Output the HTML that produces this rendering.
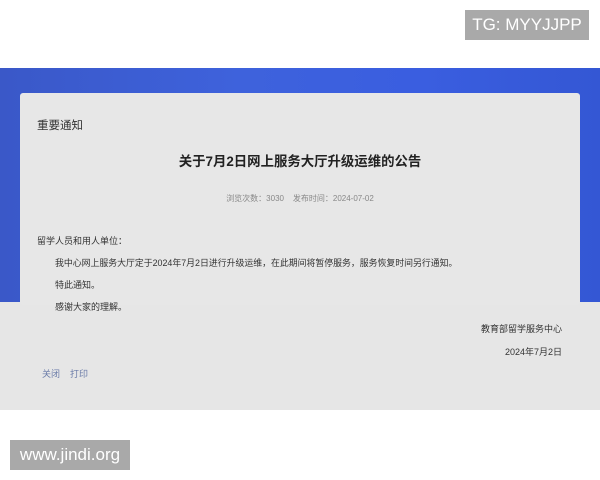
<!DOCTYPE html>
<html><head><meta charset="utf-8"><style>
body{margin:0;width:600px;height:480px;background:#fff;position:relative;overflow:hidden;font-family:"Liberation Sans","Noto Sans CJK SC",sans-serif;}
.blue{position:absolute;left:0;top:68px;width:600px;height:235px;background:linear-gradient(90deg,#3a58c8 0%,#3e62dc 40%,#3a5ee0 70%,#3457d4 100%);}
.grey{position:absolute;left:0;top:302px;width:600px;height:108px;background:#e6e6e6;}
.panel{position:absolute;left:20px;top:93px;width:560px;height:212px;background:#e7e7e7;border-radius:3px;}
.t{position:absolute;white-space:nowrap;color:#333;}
.wm{position:absolute;background:#a9a9a9;color:#fff;font-size:17px;text-align:center;}
</style></head><body>
<div class="blue"></div>
<div class="grey"></div>
<div class="panel"></div>
<div class="t" style="left:37px;top:117px;font-size:11.5px;">重要通知</div>
<div class="t" style="left:0;width:600px;text-align:center;top:150px;font-size:13.4px;font-weight:bold;color:#222;">关于7月2日网上服务大厅升级运维的公告</div>
<div class="t" style="left:0;width:600px;text-align:center;top:193px;font-size:8px;color:#888;">浏览次数：3030&nbsp;&nbsp;&nbsp;&nbsp;发布时间：2024-07-02</div>
<div class="t" style="left:37px;top:234px;font-size:9px;">留学人员和用人单位：</div>
<div class="t" style="left:55px;top:256px;font-size:8.9px;">我中心网上服务大厅定于2024年7月2日进行升级运维，在此期间将暂停服务，服务恢复时间另行通知。</div>
<div class="t" style="left:55px;top:278px;font-size:9px;">特此通知。</div>
<div class="t" style="left:55px;top:300px;font-size:9px;">感谢大家的理解。</div>
<div class="t" style="right:38px;top:322px;font-size:9px;">教育部留学服务中心</div>
<div class="t" style="right:38px;top:345px;font-size:9px;">2024年7月2日</div>
<div class="t" style="left:42px;top:367px;font-size:9px;color:#6a7ba8;">关闭&nbsp;&nbsp;&nbsp;&nbsp;打印</div>
<div class="wm" style="left:465px;top:10px;width:124px;height:30px;line-height:30px;">TG: MYYJJPP</div>
<div class="wm" style="left:10px;top:440px;width:120px;height:30px;line-height:30px;">www.jindi.org</div>
</body></html>
